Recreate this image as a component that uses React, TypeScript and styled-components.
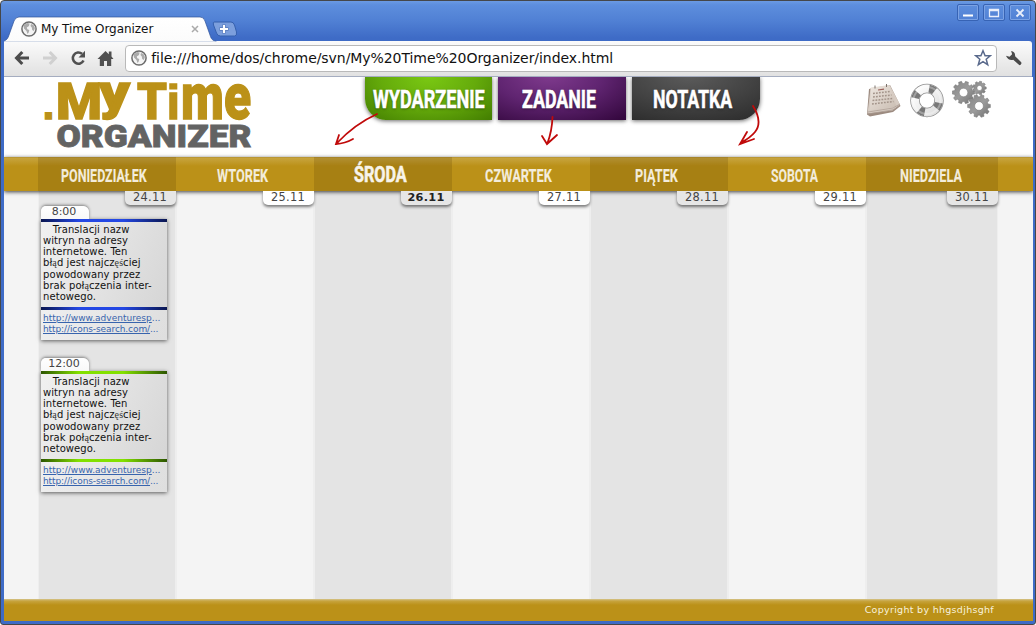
import React, { useLayoutEffect, useRef, useState } from 'react';
import styled, { createGlobalStyle, css } from 'styled-components';

const Global = createGlobalStyle`
  * { box-sizing: border-box; }
  body { margin: 0; background: #fff; overflow: hidden; }
  #root { font-family: "DejaVu Sans", Verdana, sans-serif; }
`;

const Window = styled.div`
  width: 1036px;
  height: 625px;
  display: flex;
  flex-direction: column;
  overflow: hidden;
  border: 1px solid #454749;
  border-radius: 4px 4px 3px 3px;
  background: linear-gradient(#6b9ae3 0, #5d8edd 4px, #5080d4 20px, #3e6bc6 37px, #3e6bc6 100%);
`;

const TitleBar = styled.div`
  height: 40px;
  flex: none;
  display: flex;
  align-items: flex-end;
  position: relative;
  padding-left: 3px;
`;

const TabShape = styled.svg`
  position: absolute;
  left: 3px;
  bottom: -1px;
`;

const Tab = styled.div`
  position: relative;
  width: 208px;
  height: 24px;
  display: flex;
  align-items: center;
  padding: 0 13px 0 17px;
  font-size: 12px;
  color: #111;
`;

const TabTitle = styled.span`
  flex: 1;
  margin-left: 4px;
  letter-spacing: -0.05px;
  white-space: nowrap;
`;

const WindowButtons = styled.div`
  display: flex;
  gap: 4px;
  margin-left: auto;
  align-self: flex-start;
  padding: 3px 4px 0 0;
`;

const WindowButton = styled.div`
  width: 22px;
  height: 17px;
  border: 1px solid #3763b4;
  border-radius: 2px;
  box-shadow: inset 0 0 0 1px #7ba2e4;
  display: flex;
  align-items: center;
  justify-content: center;
`;

const Toolbar = styled.div`
  height: 36px;
  flex: none;
  margin: 0 3px;
  display: flex;
  align-items: center;
  padding: 0 9px 1px 10px;
  background: linear-gradient(#fbfbfb, #e1e1e1);
  border-bottom: 1px solid #a5adc0;
  border-top-right-radius: 3px;
`;

const ToolIcon = styled.div`
  width: 27.8px;
  display: flex;
  flex: none;
`;

const Omnibox = styled.div`
  width: 872px;
  height: 27px;
  border: 1px solid #b9b9b9;
  border-radius: 4px;
  background: #fff;
  display: flex;
  align-items: center;
  padding: 0 4px 0 5px;
  margin-right: 8px;
  flex: none;
`;

const Url = styled.span`
  flex: 1;
  font-size: 14px;
  letter-spacing: -0.06px;
  color: #111;
  margin-left: 4px;
  white-space: nowrap;
`;

const Page = styled.div`
  flex: 1;
  min-height: 0;
  margin: 0 2px 3px 3px;
  display: flex;
  flex-direction: column;
  overflow: hidden;
  background: #f4f4f4;
`;

const Header = styled.header`
  height: 80px;
  flex: none;
  background: #fff;
  display: flex;
  align-items: flex-start;
  position: relative;
`;

const Logo = styled.svg`
  flex: none;
  margin-left: 36px;
  overflow: visible;
`;

const Actions = styled.div`
  display: flex;
  gap: 6px;
  margin-left: 105px;
`;

type Tone = 'green' | 'purple' | 'dark';
const tones: Record<Tone, string> = {
  green: 'radial-gradient(ellipse 95px 60px at 50% 0, #7ac813 0%, #65ab0b 50%, #417b00 100%)',
  purple: 'radial-gradient(ellipse 110px 58px at 40% -5%, #803b8e 0%, #5f2470 50%, #35083f 100%)',
  dark: 'radial-gradient(ellipse 120px 55px at 45% -5%, #5c5c5c 0%, #424242 55%, #2b2b2b 100%)',
};

const ActionButton = styled.div<{ $tone: Tone }>`
  width: ${p => (p.$tone === 'green' ? 127 : 128)}px;
  height: 43px;
  display: flex;
  justify-content: center;
  padding: 6px ${p => (p.$tone === 'green' ? 0 : 7)}px 0 0;
  background: ${p => tones[p.$tone]};
  box-shadow: 0 1px 4px rgba(0, 0, 0, 0.6);
  clip-path: inset(0 -6px -8px -6px);
  ${p => p.$tone === 'green' && css`border-bottom-left-radius: 21px;`}
  ${p => p.$tone === 'dark' && css`border-bottom-right-radius: 21px;`}
`;

const Arrows = styled.svg`
  position: absolute;
  left: 326px;
  top: 24px;
`;

const Tools = styled.div`
  display: flex;
  gap: 8px;
  margin-left: 106px;
  padding-top: 3px;
`;

const Nav = styled.nav`
  height: 34px;
  flex: none;
  display: flex;
  padding-left: 34px;
  background: linear-gradient(#ab8a2e 0, #c7a43e 1px, #bb9118 9px, #bb9118 100%);
  box-shadow: 0 1px 4px rgba(0, 0, 0, 0.75);
  position: relative;
`;

const Day = styled.div<{ $odd: boolean; $last: boolean; $today: boolean }>`
  width: ${p => (p.$last ? 132 : 138)}px;
  display: flex;
  justify-content: center;
  align-items: flex-end;
  padding: 0 ${p => (p.$last ? 2 : 6)}px ${p => (p.$today ? 3 : 5)}px 0;
  background: ${p => (p.$odd ? 'rgba(90, 60, 0, 0.2)' : 'transparent')};
`;

const Columns = styled.main`
  flex: 1;
  min-height: 0;
  display: flex;
  padding-left: 34px;
`;

const Column = styled.section<{ $odd: boolean; $last: boolean }>`
  width: ${p => (p.$last ? 132 : 138)}px;
  display: flex;
  flex-direction: column;
  background: ${p => (p.$odd ? '#e4e4e4' : '#f4f4f4')};
  box-shadow: inset 1px 0 #eeeeee, inset -1px 0 #eeeeee;
`;

const DateTab = styled.div<{ $odd: boolean; $today: boolean }>`
  align-self: flex-end;
  position: relative;
  width: 51px;
  height: 14px;
  flex: none;
  border-radius: 0 0 5px 5px;
  background: ${p => (p.$odd ? '#e6e6e6' : '#fff')};
  box-shadow: 0 2px 3px rgba(0, 0, 0, 0.5);
  clip-path: inset(0 -5px -6px -5px);
  padding-right: 1px;
  font-size: ${p => (p.$today ? 11.3 : 11.4)}px;
  letter-spacing: 0.3px;
  line-height: 13px;
  font-weight: ${p => (p.$today ? 700 : 400)};
  color: ${p => (p.$today ? '#222' : '#444')};
  text-align: center;
`;

const Note = styled.article<{ $first: boolean }>`
  width: 126px;
  margin: ${p => (p.$first ? 1 : 18)}px 0 0 3px;
  font-size: 10px;
  color: #111;
`;

const TimeTab = styled.div`
  width: 48px;
  height: 13px;
  border-radius: 5px 6px 0 0;
  background: linear-gradient(#fff, #f8f8f8);
  box-shadow: 0 -1px 3px rgba(0, 0, 0, 0.45);
  clip-path: inset(-5px -5px 0 -5px);
  padding-right: 2px;
  font-size: 11px;
  line-height: 12px;
  color: #444;
  text-align: center;
`;

const NoteBody = styled.div`
  height: 121px;
  background: linear-gradient(115deg, #f1f1f1, #d3d3d3);
  box-shadow: 0 1px 4px rgba(0, 0, 0, 0.6);
`;

const Stripe = styled.div<{ $color: string; $edge: string }>`
  height: 3px;
  background: linear-gradient(90deg, ${p => p.$edge}, ${p => p.$color} 30%, ${p => p.$color} 65%, ${p => p.$edge});
`;

const NoteText = styled.p`
  margin: 0;
  height: 85px;
  padding: 2px 0 0 2px;
  line-height: 11.15px;
  letter-spacing: 0.08px;
  white-space: pre;
`;

const Accent = styled.span`
  font-family: "Liberation Serif", serif;
  font-size: 10px;
  line-height: 1;
  color: #333;
`;

const Links = styled.div`
  height: 30px;
  background: linear-gradient(rgba(255, 255, 255, 0.25), rgba(255, 255, 255, 0.25));
  padding: 3px 0 0 2px;
  font-size: 9px;
  line-height: 11px;
`;

const NoteLink = styled.div<{ $tight: boolean }>`
  color: #3864ad;
  white-space: nowrap;
  letter-spacing: ${p => (p.$tight ? -0.09 : 0.03)}px;
`;

const LinkText = styled.span`
  text-decoration: underline;
`;

const Footer = styled.footer`
  height: 22px;
  flex: none;
  display: flex;
  justify-content: flex-end;
  padding: 4px 39px 0 0;
  background: linear-gradient(#d5c48b 0, #c7a43e 2px, #bb9118 6px, #bb9118 100%);
  color: #f8f1dc;
  font-size: 9.5px;
  letter-spacing: 0.3px;
  line-height: 13px;
`;

const CondensedBox = styled.span<{ $width: number }>`
  width: ${p => p.$width}px;
  display: block;
  overflow: visible;
`;

const CondensedText = styled.span<{ $size: number; $strong?: boolean; $shadow?: boolean }>`
  display: inline-block;
  transform-origin: 0 50%;
  white-space: nowrap;
  font: 700 ${p => p.$size}px/1.18 Roboto, sans-serif;
  color: ${p => (p.$shadow ? '#fff' : p.$strong ? '#f8f4ea' : '#f3ecdb')};
  -webkit-text-stroke: ${p => (p.$strong ? 0.6 : 0.1)}px currentColor;
  text-shadow: ${p => (p.$shadow ? '0 1px 3px rgba(0,0,0,.5)' : 'none')};
`;

/* Lettering squeezed horizontally to the given width. */
function Condensed({ width, size, strong, shadow, children }: { width: number; size: number; strong?: boolean; shadow?: boolean; children: string }) {
  const ref = useRef<HTMLSpanElement>(null);
  const [scale, setScale] = useState(0.6);
  useLayoutEffect(() => {
    if (ref.current) setScale(width / ref.current.offsetWidth);
  }, [width, size, children]);
  return (
    <CondensedBox $width={width}>
      <CondensedText ref={ref} $size={size} $strong={strong} $shadow={shadow} style={{ transform: `scaleX(${scale})` }}>
        {children}
      </CondensedText>
    </CondensedBox>
  );
}

const Globe = () => (
  <svg width="16" height="16" viewBox="0 0 16 16">
    <circle cx="8" cy="8" r="7.1" fill="#f4f4f4" stroke="#6c6c6c" strokeWidth="1.5" />
    <path d="M2.5 4.5 6 2l2.6.5L8 5 5.8 6.6l.5 1.6 2 .8-.6 2.4L6.500 13l-1-3L3 7.500zM10 3l2.500 1 1.400 3-1 3-1.700-1-.4-2.400L9.500 5z" fill="#ababab" />
  </svg>
);

const gear = (cx: number, cy: number, r: number, teeth: number) => {
  const pts: string[] = [];
  for (let i = 0; i < teeth; i++) {
    const a = (i * 2 * Math.PI) / teeth;
    const s = (2 * Math.PI) / teeth;
    [[-0.34, 0.8], [-0.22, 1], [0.22, 1], [0.34, 0.8]].forEach(([o, k]) => {
      pts.push(`${(cx + Math.cos(a + o * s) * r * k).toFixed(2)} ${(cy + Math.sin(a + o * s) * r * k).toFixed(2)}`);
    });
  }
  const h = r * 0.38;
  return `M${pts.join('L')}ZM${cx - h} ${cy}a${h} ${h} 0 1 0 ${2 * h} 0a${h} ${h} 0 1 0 ${-2 * h} 0Z`;
};

const CalendarIcon = () => (
  <svg width="36" height="38" viewBox="0 0 36 38">
    <defs>
      <linearGradient id="paper" x2="1" y2="1"><stop stopColor="#eee7e0" /><stop offset="1" stopColor="#c9bcb1" /></linearGradient>
    </defs>
    <path d="M3 9 1 34.500l3 2 23-4.500 7.500-6L24 5z" fill="#9c8b80" />
    <path d="M4.500 8 1.500 33.500l25-3L34 24.500 24 5.500z" fill="#d6cbc2" />
    <path d="M5 7.500 23.500 5l7 21.500-27 4z" fill="url(#paper)" />
    <path d="M2 32l25-4 7-4M2 34l25-4.200 7-4.300" stroke="#a99a8f" strokeWidth=".7" fill="none" />
    <path d="M7 13.500l17-2M7 17l18.500-2M6.500 20.500l20-2M6 24l21.500-2.500" stroke="#a3948a" strokeWidth="1.500" strokeDasharray="1.800 1.200" />
    <path d="M12 10l6-.9" stroke="#9b5f58" strokeWidth="1.200" />
    <path d="M9 5.500v3M20.500 4v3" stroke="#7b726c" />
  </svg>
);

const RingIcon = () => (
  <svg width="34" height="38" viewBox="0 0 34 38">
    <defs>
      <linearGradient id="ring" x2="1" y2="1"><stop stopColor="#fff" /><stop offset="1" stopColor="#dedede" /></linearGradient>
    </defs>
    <circle cx="17" cy="20.500" r="12" fill="none" stroke="#8d8d8d" strokeWidth="9.500" />
    <circle cx="17" cy="20.500" r="12" fill="none" stroke="url(#ring)" strokeWidth="8" />
    <circle cx="17" cy="20.500" r="12" fill="none" stroke="#777" strokeWidth="8" strokeDasharray="6 12.850" transform="rotate(-80 17 20.500)" />
    <circle cx="17" cy="20.500" r="13.500" fill="none" stroke="#fff" strokeOpacity=".3" strokeWidth="2" />
  </svg>
);

const GearsIcon = () => (
  <svg width="40" height="38" viewBox="0 0 40 38">
    <defs>
      <linearGradient id="steel" x2="1" y2="1"><stop stopColor="#858585" /><stop offset=".5" stopColor="#9c9c9c" /><stop offset="1" stopColor="#6f6f6f" /></linearGradient>
    </defs>
    <g fill="url(#steel)" stroke="#777" strokeWidth=".5" fillRule="evenodd">
      <path d={gear(11.500, 12.500, 11.300, 10)} />
      <path d={gear(27.500, 8, 6.800, 9)} />
      <path d={gear(27, 26, 11.500, 10)} />
    </g>
  </svg>
);

const days = [
  { name: 'PONIEDZIAŁEK', width: 86, date: '24.11' },
  { name: 'WTOREK', width: 51, date: '25.11' },
  { name: 'ŚRODA', width: 53, date: '26.11', today: true },
  { name: 'CZWARTEK', width: 67, date: '27.11' },
  { name: 'PIĄTEK', width: 43, date: '28.11' },
  { name: 'SOBOTA', width: 47, date: '29.11' },
  { name: 'NIEDZIELA', width: 62, date: '30.11' },
];

const notes = [
  { time: '8:00', color: '#2347e4', edge: '#0a1650' },
  { time: '12:00', color: '#83e000', edge: '#2c5500' },
];

export default function App() {
  return (
    <>
      <Global />
      <Window>
        <TitleBar>
          <TabShape width="236" height="26" viewBox="0 0 236 26">
            <defs>
              <linearGradient id="tab" x2="0" y2="1"><stop stopColor="#fff" /><stop offset="1" stopColor="#fbfbfb" /></linearGradient>
            </defs>
            <path d="M0 26v-1c3-1 4-3 5-6L10 5q1.500-4 5-4H196q4 0 5 4l5 14c1 4 3 6 6 6v1z" fill="url(#tab)" stroke="#2f5299" strokeOpacity=".7" />
            <path d="M0 25.500h213v1H0z" fill="#fbfbfb" />
            <path d="M210 6h17q2.500 0 3.500 3l2 7q.8 4-2 4h-14q-3 0-4-3l-3-8q-.7-3 .5-3z" fill="#7c9fdd" stroke="#3560ae" />
            <path d="M220 8.500v9M215.500 13h9" stroke="#5478bb" strokeWidth="3.600" />
            <path d="M220 9v8M216 13h8" stroke="#fff" strokeWidth="2.200" />
          </TabShape>
          <Tab>
            <Globe />
            <TabTitle>My Time Organizer</TabTitle>
            <svg width="8" height="8" viewBox="0 0 8 8"><path d="M1 1l6 6M7 1 1 7" stroke="#aaa" strokeWidth="1.500" /></svg>
          </Tab>
          <WindowButtons>
            <WindowButton><svg width="12" height="10"><path d="M1 6.500h10v2H1z" fill="#fff" /></svg></WindowButton>
            <WindowButton><svg width="12" height="10"><path d="M1.500 1.500h9v7h-9zM1 2.500h10" fill="none" stroke="#e9effb" strokeWidth="1.300" /></svg></WindowButton>
            <WindowButton><svg width="12" height="10"><path d="M2.500 1.500l7 7M9.500 1.500l-7 7" stroke="#e9effb" strokeWidth="1.900" /></svg></WindowButton>
          </WindowButtons>
        </TitleBar>

        <Toolbar>
          <ToolIcon><svg width="16" height="16" viewBox="0 0 16 16"><path d="M8.300 2 2.500 8l5.800 6M3 8h12" fill="none" stroke="#4c4c4c" strokeWidth="3" /></svg></ToolIcon>
          <ToolIcon><svg width="16" height="16" viewBox="0 0 16 16"><path d="M7.700 2l5.800 6-5.800 6M13 8H1" fill="none" stroke="#d0d0d0" strokeWidth="3" /></svg></ToolIcon>
          <ToolIcon><svg width="16" height="16" viewBox="0 0 16 16"><path d="M13.500 10.500A5.600 5.600 0 1 1 12 3.800" fill="none" stroke="#505050" strokeWidth="2.600" /><path d="M15 .8v6.700H8.500z" fill="#505050" /></svg></ToolIcon>
          <ToolIcon><svg width="17" height="17" viewBox="0 0 17 17"><path d="M8.500 1 .5 9h2.300v7h4.200v-5h3v5h4.200V9h2.300L14.500 6.500V1.500h-2.700v2.700z" fill="#505050" /></svg></ToolIcon>
          <Omnibox>
            <Globe />
            <Url>file:///home/dos/chrome/svn/My%20Time%20Organizer/index.html</Url>
            <svg width="18" height="18" viewBox="0 0 18 18"><path d="M9 1.700l2.100 5h5.200l-4.100 3.500 1.500 5.500L9 12.600l-4.700 3.100 1.500-5.500L1.700 6.700h5.200z" fill="#fff" stroke="#5a6a8c" strokeWidth="1.500" /></svg>
          </Omnibox>
          <svg width="19" height="19" viewBox="0 0 19 19"><path d="M6.500 1.500Q11 2 10.800 7l6.500 6.500q1 2.500-1.800 3.300L8.800 10.800Q3.500 12 1 6.500l3.800 1.200L7.600 5z" fill="#4a4a4a" /></svg>
        </Toolbar>

        <Page>
          <Header>
            <Logo width="220" height="78" viewBox="40 77 220 78">
              <text fontFamily="Roboto, sans-serif" fontWeight="900" fill="#bb9118" stroke="#bb9118" strokeWidth="1.300">
                <tspan x="42.500" y="118.500" fontSize="43" fontFamily="Liberation Sans, sans-serif" fontWeight="700">.</tspan>
                <tspan x="56" y="118.500" fontSize="50" textLength="46" lengthAdjust="spacingAndGlyphs">M</tspan>
                <tspan x="99" y="109" fontSize="48" textLength="31" lengthAdjust="spacingAndGlyphs">y</tspan>
                <tspan x="137" y="118.500" fontSize="50" textLength="30" lengthAdjust="spacingAndGlyphs">T</tspan>
                <tspan x="166.500" y="118.500" fontSize="49" fontFamily="Liberation Sans, sans-serif" fontWeight="700">i</tspan>
                <tspan x="181" y="118.500" fontSize="65" textLength="70" lengthAdjust="spacingAndGlyphs">me</tspan>
              </text>
              <text x="56.500" y="146.500" fontFamily="Roboto, sans-serif" fontWeight="900" fontSize="31" fill="#636363" stroke="#636363" strokeWidth=".8" textLength="195" lengthAdjust="spacingAndGlyphs">ORGANIZER</text>
            </Logo>
            <Actions>
              <ActionButton $tone="green"><Condensed width={112} size={26.5} strong shadow>WYDARZENIE</Condensed></ActionButton>
              <ActionButton $tone="purple"><Condensed width={74} size={26.5} strong shadow>ZADANIE</Condensed></ActionButton>
              <ActionButton $tone="dark"><Condensed width={79} size={26.5} strong shadow>NOTATKA</Condensed></ActionButton>
            </Actions>
            <Tools>
              <CalendarIcon />
              <RingIcon />
              <GearsIcon />
            </Tools>
            <Arrows width="440" height="50" viewBox="330 101 440 50" fill="none" stroke="#c00a0a" strokeWidth="1.800" strokeLinecap="round">
              <path d="M377 114Q355 124 337 143M339 135l-3 9q9-.5 17-5" />
              <path d="M552.500 117Q552 131 547.500 143M542 136l5 8 10-9" />
              <path d="M753 106Q763 122 755 132 750 138 742 142M747 132l-7 12 14-5" />
            </Arrows>
          </Header>

          <Nav>
            {days.map((d, i) => (
              <Day key={d.name} $odd={i % 2 === 0} $last={i === 6} $today={!!d.today}>
                <Condensed width={d.width} size={d.today ? 22 : 18} strong={d.today}>{d.name}</Condensed>
              </Day>
            ))}
          </Nav>

          <Columns>
            {days.map((d, i) => (
              <Column key={d.date} $odd={i % 2 === 0} $last={i === 6}>
                <DateTab $odd={i % 2 === 0} $today={!!d.today}>{d.date}</DateTab>
                {i === 0 && notes.map((n, k) => (
                  <Note key={n.time} $first={k === 0}>
                    <TimeTab>{n.time}</TimeTab>
                    <NoteBody>
                      <Stripe $color={n.color} $edge={n.edge} />
                      <NoteText>
                        {'   Translacji nazw\nwitryn na adresy\ninternetowe. Ten\nbł'}<Accent>ą</Accent>{'d jest najcz'}<Accent>ęś</Accent>{'ciej\npowodowany przez\nbrak poł'}<Accent>ą</Accent>{'czenia inter-\nnetowego.'}
                      </NoteText>
                      <Stripe $color={n.color} $edge={n.edge} />
                      <Links>
                        <NoteLink $tight={false}><LinkText>http://www.adventuresp</LinkText>...</NoteLink>
                        <NoteLink $tight><LinkText>http://icons-search.com/</LinkText>...</NoteLink>
                      </Links>
                    </NoteBody>
                  </Note>
                ))}
              </Column>
            ))}
          </Columns>
          <Footer>Copyright by hhgsdjhsghf</Footer>
        </Page>
      </Window>
    </>
  );
}
